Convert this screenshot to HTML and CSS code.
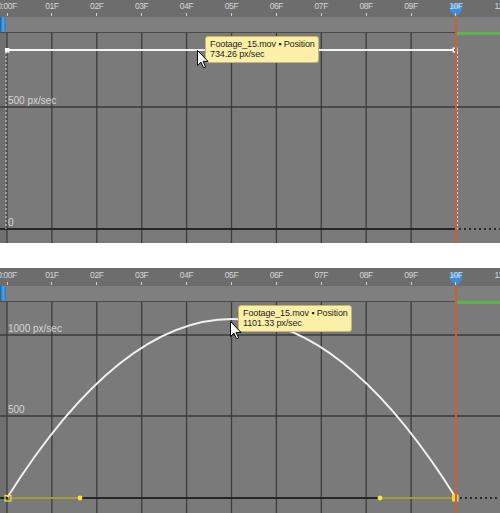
FILE: index.html
```html
<!DOCTYPE html>
<html>
<head>
<meta charset="utf-8">
<link rel="stylesheet" href="styles.css">
</head>
<body>
<div class="panel p1">
  <div class="ruler">
    <div class="ticks">
      <span class="tk">0:00F</span><span class="tk">01F</span><span class="tk">02F</span><span class="tk">03F</span><span class="tk">04F</span><span class="tk">05F</span><span class="tk">06F</span><span class="tk">07F</span><span class="tk">08F</span><span class="tk">09F</span><span class="tk">10F</span><span class="tk">11F</span>
    </div>
  </div>
  <div class="bar"><div class="wa"></div></div>
  <svg class="graph" width="500" height="211" viewBox="0 0 500 211">
    <rect x="0" y="0" width="500" height="1" fill="#4b4b4b"/>
    <rect x="0" y="1" width="6" height="210" fill="#707070"/>
    <g stroke="#3d3d3d" stroke-width="1.3">
      <line x1="7" y1="1" x2="7" y2="211"/>
      <line x1="51.9" y1="1" x2="51.9" y2="211"/>
      <line x1="96.8" y1="1" x2="96.8" y2="211"/>
      <line x1="141.7" y1="1" x2="141.7" y2="211"/>
      <line x1="186.6" y1="1" x2="186.6" y2="211"/>
      <line x1="231.5" y1="1" x2="231.5" y2="211"/>
      <line x1="276.4" y1="1" x2="276.4" y2="211"/>
      <line x1="321.3" y1="1" x2="321.3" y2="211"/>
      <line x1="366.2" y1="1" x2="366.2" y2="211"/>
      <line x1="411.1" y1="1" x2="411.1" y2="211"/>
    </g>
    <line x1="0" y1="75" x2="500" y2="75" stroke="#3b3b3b" stroke-width="1.5"/>
    <line x1="0" y1="197" x2="456" y2="197" stroke="#262626" stroke-width="2"/>
    <line x1="459" y1="197" x2="500" y2="197" stroke="#2a2a2a" stroke-width="2" stroke-dasharray="2 3"/>
    <rect x="456" y="0" width="44" height="3" fill="#5db546"/>
    <line x1="6" y1="20" x2="6" y2="197" stroke="#dcdcdc" stroke-width="1" stroke-dasharray="2 2"/>
    <line x1="457.5" y1="20" x2="457.5" y2="197" stroke="#dcdcdc" stroke-width="1" stroke-dasharray="2 2"/>
    <line x1="7" y1="18" x2="455" y2="18" stroke="#f4f4f4" stroke-width="2"/>
    <rect x="5" y="16" width="4.5" height="4.5" fill="#ffffff"/>
    <rect x="452.5" y="15.5" width="5" height="5" fill="#ffffff"/>
    <rect x="454" y="17" width="2" height="2" fill="#777"/>
    <text x="8" y="72" class="axis">500 px/sec</text>
    <text x="8" y="194" class="axis">0</text>
  </svg>
  <svg class="cti" viewBox="0 0 14 14"><path d="M1 3.5Q1 0.5 4 0.5H10Q13 0.5 13 3.5V8L7 14L1 8Z" fill="#3a8fd8"/><path d="M2 4Q2 1.5 4.5 1.5H9.5Q12 1.5 12 4V5H2Z" fill="#6fb6ee" opacity="0.6"/></svg>
  <div class="red"></div>
  <div class="tip t1">Footage_15.mov ▪ Position<br>734.26 px/sec</div>
  <svg class="cursor c1" viewBox="0 0 12 19"><path d="M0.5 0.5V15.5L4 12.2L6.5 17.8L8.6 16.9L6.1 11.4H11Z" fill="#ffffff" stroke="#000" stroke-width="1" stroke-linejoin="round"/></svg>
</div>

<div class="panel p2">
  <div class="ruler">
    <div class="ticks">
      <span class="tk">0:00F</span><span class="tk">01F</span><span class="tk">02F</span><span class="tk">03F</span><span class="tk">04F</span><span class="tk">05F</span><span class="tk">06F</span><span class="tk">07F</span><span class="tk">08F</span><span class="tk">09F</span><span class="tk">10F</span><span class="tk">11F</span>
    </div>
  </div>
  <div class="bar"><div class="wa"></div></div>
  <svg class="graph" width="500" height="212" viewBox="0 0 500 212">
    <rect x="0" y="0" width="500" height="1" fill="#4b4b4b"/>
    <rect x="0" y="1" width="6" height="211" fill="#707070"/>
    <g stroke="#3d3d3d" stroke-width="1.3">
      <line x1="7" y1="1" x2="7" y2="212"/>
      <line x1="51.9" y1="1" x2="51.9" y2="212"/>
      <line x1="96.8" y1="1" x2="96.8" y2="212"/>
      <line x1="141.7" y1="1" x2="141.7" y2="212"/>
      <line x1="186.6" y1="1" x2="186.6" y2="212"/>
      <line x1="231.5" y1="1" x2="231.5" y2="212"/>
      <line x1="276.4" y1="1" x2="276.4" y2="212"/>
      <line x1="321.3" y1="1" x2="321.3" y2="212"/>
      <line x1="366.2" y1="1" x2="366.2" y2="212"/>
      <line x1="411.1" y1="1" x2="411.1" y2="212"/>
    </g>
    <line x1="0" y1="34" x2="500" y2="34" stroke="#3b3b3b" stroke-width="1.5"/>
    <line x1="0" y1="115" x2="500" y2="115" stroke="#3b3b3b" stroke-width="1.5"/>
    <rect x="456" y="0" width="44" height="3" fill="#5db546"/>
    <text x="8" y="31" class="axis">1000 px/sec</text>
    <text x="8" y="112" class="axis">500</text>
    <path d="M7 197Q232 -161 456 197" fill="none" stroke="#f2f2f2" stroke-width="1.8"/>
    <line x1="0" y1="197" x2="456" y2="197" stroke="#262626" stroke-width="2"/>
    <line x1="460" y1="197" x2="500" y2="197" stroke="#2a2a2a" stroke-width="2" stroke-dasharray="2 3"/>
    <line x1="8" y1="197" x2="80" y2="197" stroke="#a89b36" stroke-width="2"/>
    <line x1="380" y1="197" x2="455" y2="197" stroke="#a89b36" stroke-width="2"/>
    <circle cx="80" cy="197" r="2.4" fill="#f4e63a"/>
    <circle cx="380" cy="197" r="2.4" fill="#f4e63a"/>
    <rect x="5" y="194.5" width="6" height="5.5" fill="none" stroke="#efdc3a" stroke-width="1.2"/>
    <rect x="452" y="193.5" width="6.5" height="7" fill="#f2d631"/>
  </svg>
  <svg class="cti" viewBox="0 0 14 14"><path d="M1 3.5Q1 0.5 4 0.5H10Q13 0.5 13 3.5V8L7 14L1 8Z" fill="#3a8fd8"/><path d="M2 4Q2 1.5 4.5 1.5H9.5Q12 1.5 12 4V5H2Z" fill="#6fb6ee" opacity="0.6"/></svg>
  <div class="red"></div>
  <div class="tip t2">Footage_15.mov ▪ Position<br>1101.33 px/sec</div>
  <svg class="cursor c2" viewBox="0 0 12 19"><path d="M0.5 0.5V15.5L4 12.2L6.5 17.8L8.6 16.9L6.1 11.4H11Z" fill="#ffffff" stroke="#000" stroke-width="1" stroke-linejoin="round"/></svg>
</div>
</body>
</html>
```

FILE: styles.css
```css
html, body {
  margin: 0;
  padding: 0;
  background: #ffffff;
}
body {
  width: 500px;
  height: 513px;
  overflow: hidden;
  font-family: "Liberation Sans", Arial, sans-serif;
}
.panel {
  position: relative;
  width: 500px;
  height: 244px;
  background: #7a7a7a;
  display: flex;
  flex-direction: column;
  overflow: hidden;
}
.p1 {
  margin-top: -1px;
}
.p2 {
  margin-top: 25px;
  height: 246px;
}
.ruler {
  flex: none;
  height: 18px;
  background: #6d6d6d;
  overflow: hidden;
}
.ticks {
  display: flex;
  margin-left: -15.45px;
}
.tk {
  flex: none;
  width: 44.9px;
  display: flex;
  flex-direction: column;
  align-items: center;
  padding-top: 3px;
  font-size: 8.5px;
  line-height: 8px;
  color: #d6d6d6;
  letter-spacing: -0.4px;
  position: relative;
  z-index: 2;
}
.tk::after {
  content: "";
  width: 1px;
  height: 3px;
  margin-top: 3px;
  background: #cfcfcf;
}
.bar {
  flex: none;
  height: 15px;
  background: #7f7f7f;
  display: flex;
}
.wa {
  width: 6px;
  background: linear-gradient(90deg, #1b5f9f, #4ea6ea 50%, #2a78c0);
  border-radius: 0 3px 3px 0;
}
.graph {
  display: block;
  flex: none;
}
.axis {
  font-family: "Liberation Sans", Arial, sans-serif;
  font-size: 10px;
  fill: #d6d6d6;
}
.cti {
  position: absolute;
  left: 449px;
  top: 4px;
  width: 14px;
  height: 14px;
  z-index: 1;
}
.red {
  position: absolute;
  left: 455px;
  top: 17px;
  bottom: 0;
  width: 1.5px;
  background: #cf5d3c;
}
.tip {
  position: absolute;
  top: 37px;
  background: #fcefa7;
  border: 1px solid #c7b66a;
  border-radius: 3px;
  padding: 2px 3px 3px 4px;
  font-size: 9px;
  line-height: 10px;
  color: #1e1e1e;
  letter-spacing: -0.12px;
  white-space: nowrap;
}
.t1 {
  left: 205px;
}
.t2 {
  left: 238px;
}
.cursor {
  position: absolute;
  width: 12px;
  height: 19px;
}
.c1 {
  left: 196.5px;
  top: 50.5px;
}
.c2 {
  left: 229.5px;
  top: 52.5px;
}
```
